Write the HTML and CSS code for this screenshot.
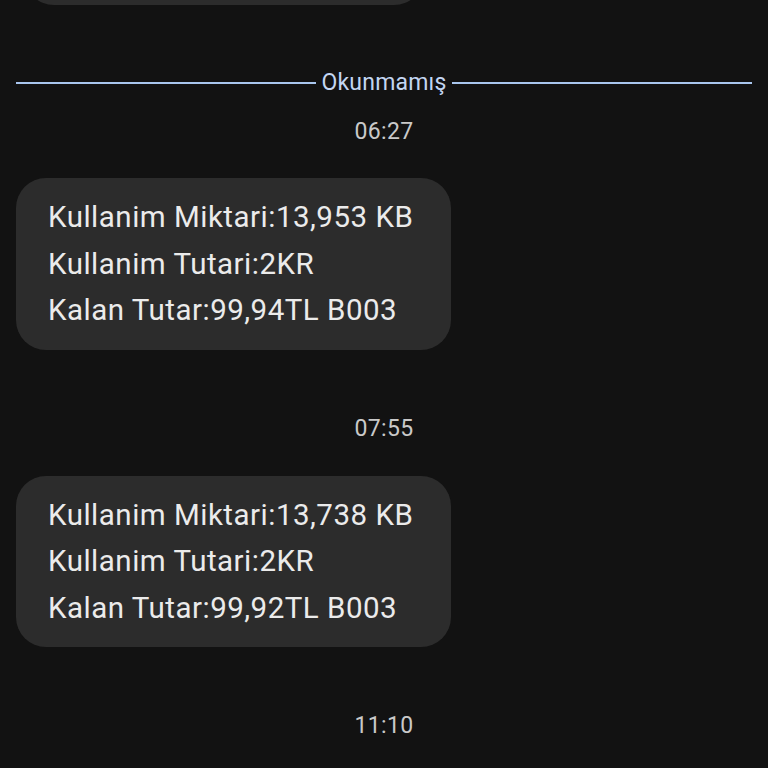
FILE: index.html
```html
<!DOCTYPE html>
<html lang="tr">
<head>
<meta charset="utf-8">
<link rel="stylesheet" href="styles.css">
</head>
<body>
<div class="thread">
  <div class="bubble bubble-prev"></div>
  <div class="divider"><span class="line"></span><span class="label">Okunmamış</span><span class="line"></span></div>
  <div class="time t1">06:27</div>
  <div class="bubble b1">Kullanim Miktari:13,953 KB<br>Kullanim Tutari:2KR<br>Kalan Tutar:99,94TL B003</div>
  <div class="time t2">07:55</div>
  <div class="bubble b2">Kullanim Miktari:13,738 KB<br>Kullanim Tutari:2KR<br>Kalan Tutar:99,92TL B003</div>
  <div class="time t3">11:10</div>
</div>
</body>
</html>
```

FILE: styles.css
```css
html, body {
  margin: 0;
  padding: 0;
  background: #121212;
  height: 768px;
  overflow: hidden;
}
.thread {
  display: flex;
  flex-direction: column;
  align-items: flex-start;
  font-family: Roboto, "Noto Sans", sans-serif;
}
.bubble {
  background: #2c2c2c;
  color: #ebebeb;
  border-radius: 30px;
  margin-left: 16px;
  padding: 16px 38px 16px 32px;
  font-size: 29.5px;
  letter-spacing: 0.5px;
  line-height: 46.5px;
  white-space: nowrap;
}
.bubble-prev {
  width: 400px;
  height: 60px;
  padding: 0;
  margin-left: 24px;
  margin-top: -55px;
}
.divider {
  align-self: stretch;
  display: flex;
  align-items: center;
  gap: 5px;
  margin: 66px 16px 0;
  height: 24px;
}
.divider .line {
  flex: 1;
  height: 2px;
  background: #a9c6ee;
}
.divider .label {
  color: #c3d6f2;
  font-size: 23px;
  letter-spacing: 0.2px;
  line-height: 24px;
}
.time {
  align-self: stretch;
  text-align: center;
  color: #c9c9c9;
  font-size: 23px;
  letter-spacing: 0.3px;
  line-height: 24px;
}
.t1 { margin-top: 25px; }
.b1 { margin-top: 34px; }
.t2 { margin-top: 67px; }
.b2 { margin-top: 35px; }
.t3 { margin-top: 67px; }
```
